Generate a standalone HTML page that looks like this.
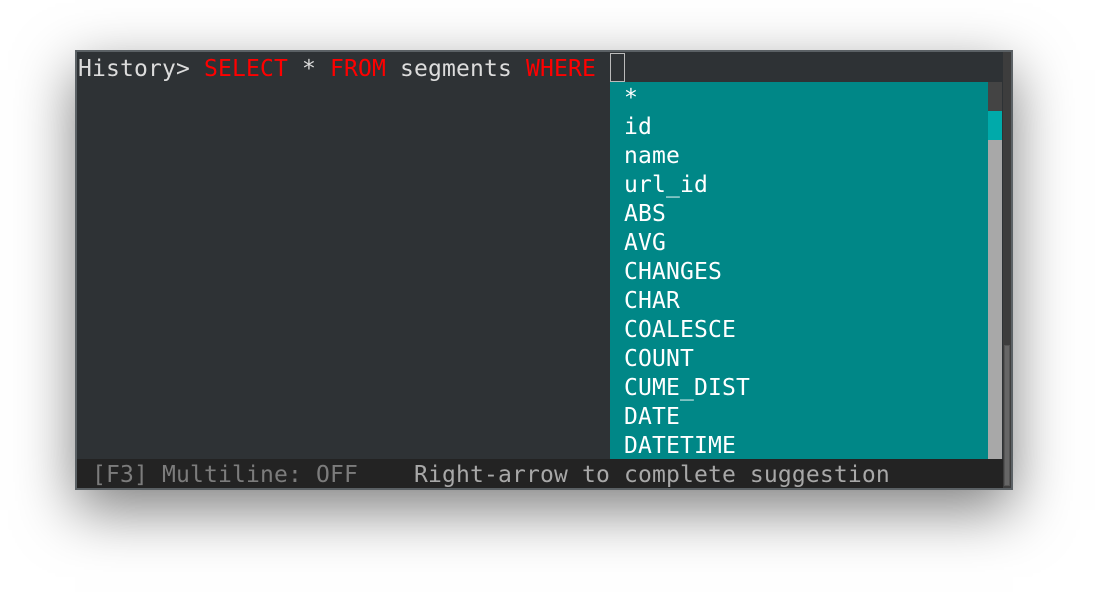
<!DOCTYPE html>
<html><head><style>
html,body{margin:0;padding:0;background:#fff;width:1099px;height:601px;overflow:hidden}
.win{position:absolute;left:75px;top:50px;width:934px;height:436px;border:2px solid #5b6165;background:#2e3235;box-shadow:0 20px 55px rgba(0,0,0,0.5)}
.t{position:absolute;font-family:"DejaVu Sans Mono","Liberation Mono",monospace;font-size:23px;letter-spacing:0.15px;line-height:29px;white-space:pre;color:#dcdcdc}
.r{color:#f00}
.pop{position:absolute;left:533px;top:30px;width:378px;height:377px;background:#008787}
.sb{position:absolute;left:911px;top:30px;width:14px;height:377px;background:#a8a8a8}
.status{position:absolute;left:0;top:407px;width:926px;height:29px;background:#232323}
.vs{position:absolute;left:926px;top:0;width:8px;height:436px;background:#3d3d3d}
</style></head><body>
<div class="win">
<div class="t" style="left:1px;top:3px">History&gt; <span class="r">SELECT</span> * <span class="r">FROM</span> segments <span class="r">WHERE</span> </div>
<div style="position:absolute;left:533px;top:1px;width:13px;height:27px;border:1px solid #bbb"></div>
<div class="pop"></div>
<div class="sb"><div style="height:29px;background:#444"></div><div style="height:29px;background:#00aaaa"></div></div>
<div class="t" style="left:547px;top:32px;color:#fff">*
id
name
url_id
ABS
AVG
CHANGES
CHAR
COALESCE
COUNT
CUME_DIST
DATE
DATETIME</div>
<div class="status"></div>
<div class="t" style="left:15px;top:409px;color:#7c7c7c">[F3] Multiline: OFF</div>
<div class="t" style="left:337px;top:409px;color:#a8a8a8">Right-arrow to complete suggestion</div>
<div class="vs"><div style="position:absolute;left:1px;top:293px;width:6px;height:141px;background:#666;border:1px solid #555;box-sizing:border-box"></div></div>
</div>
</body></html>
